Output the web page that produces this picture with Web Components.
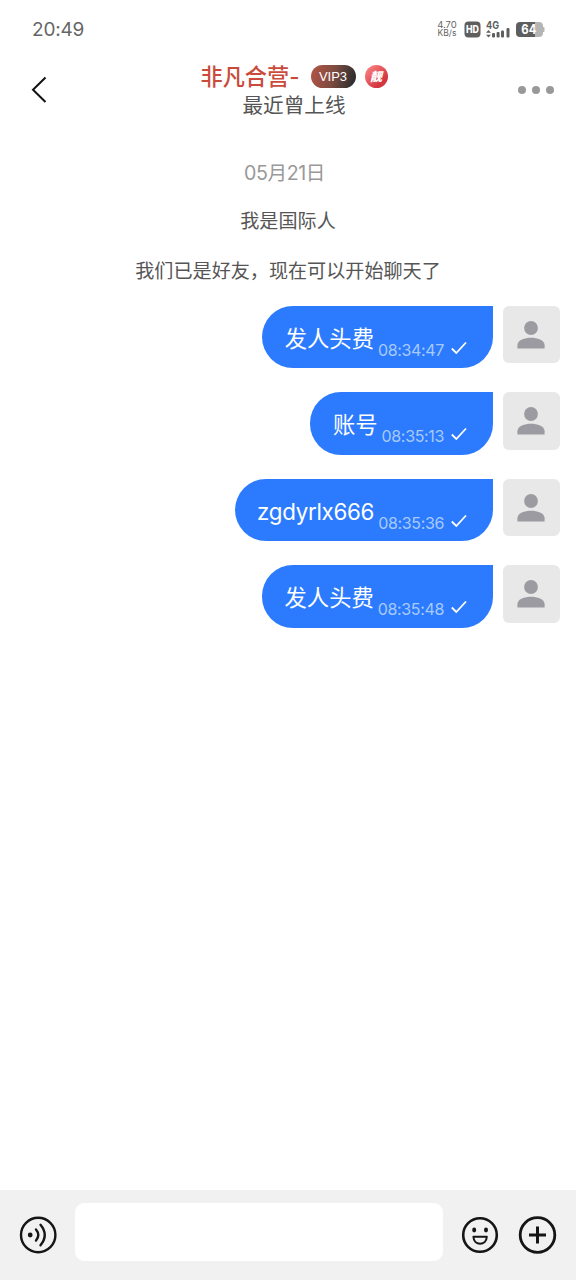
<!DOCTYPE html>
<html lang="zh-CN">
<head>
<meta charset="utf-8">
<title>Chat</title>
<style>
html,body{margin:0;height:100%;background:#fff}
body{font-family:Inter,"Noto Sans CJK SC",sans-serif;overflow:hidden}
</style>
</head>
<body>
<chat-app></chat-app>
<script>
const define = (name, html) => {
  const t = document.createElement('template');
  t.innerHTML = html;
  customElements.define(name, class extends HTMLElement {
    constructor() {
      super();
      this.attachShadow({mode: 'open'}).appendChild(t.content.cloneNode(true));
    }
  });
};

define('status-bar', `
<style>
:host{display:flex;align-items:center;height:58px;padding:0 31px 0 32px;box-sizing:border-box;color:#666}
.clock{font-size:19px;line-height:24px;letter-spacing:-.2px;flex:1;padding-top:2px}
.speed{font-size:9.5px;line-height:9px;text-align:center;width:22px;margin-right:6px;white-space:nowrap}
.speed div+div{font-size:8.500px}
svg{display:block}
text{font-family:Inter,sans-serif}
.hd{margin-right:5px}.sig{margin-right:5px}
</style>
<div class="clock">20:49</div>
<div class="speed"><div>4.70</div><div>KB/s</div></div>
<svg class="hd" width="17" height="17"><rect x=".5" y=".5" width="16" height="16" rx="4" fill="#5e5e5e"/><text x="8.5" y="12.2" font-size="10" font-weight="800" fill="#fff" text-anchor="middle" textLength="13" lengthAdjust="spacingAndGlyphs">HD</text></svg>
<svg class="sig" width="25" height="19"><text x="0" y="8.8" font-size="10.5" font-weight="700" fill="#5e5e5e" textLength="13" lengthAdjust="spacingAndGlyphs">4G</text>
<g fill="#5e5e5e"><path d="M0 12.7 2.5 10 5 12.7zM0 14.8h5l-2.5 2.7z"/><rect x="6" y="13" width="3" height="4.5" rx="1"/><rect x="10.6" y="12" width="3" height="5.5" rx="1"/><rect x="15" y="10.5" width="3" height="7" rx="1"/><rect x="20.5" y="8" width="3" height="9.5" rx="1"/></g></svg>
<svg width="29" height="15"><path d="M4 0h15v15H4a4 4 0 0 1-4-4V4a4 4 0 0 1 4-4z" fill="#5e5e5e"/><path d="M19 0h4a4 4 0 0 1 4 4v7a4 4 0 0 1-4 4h-4z" fill="#b5b5b5"/><rect x="26" y="5" width="2.5" height="5" rx="1" fill="#b5b5b5"/><text x="12.800" y="12.2" font-size="13" font-weight="700" fill="#fff" text-anchor="middle" textLength="15" lengthAdjust="spacingAndGlyphs">64</text></svg>
`);

define('vip-badge', `
<style>
:host{display:block;width:45px;height:23px;border-radius:12px;background:linear-gradient(105deg,#b65545,#7c4b40 50%,#303030 90%);color:#fff;font:13px/23px "Liberation Sans",sans-serif;text-align:center}
</style><slot></slot>`);

define('nice-badge', `
<style>
:host{display:block;width:23px;height:23px;border-radius:50%;background:linear-gradient(135deg,#ff8a8a,#d2363f 75%);color:#fff;font:italic 900 12px/22px "Noto Sans CJK SC",sans-serif;text-align:center}
</style><slot></slot>`);

define('chat-header', `
<style>
:host{display:grid;grid-template-columns:80px 1fr 80px;height:72px}
.back{padding:18px 0 0 31px}
.mid{display:flex;flex-direction:column;align-items:center;padding-left:12px}
.title{display:flex;align-items:center;height:36px}
.name{color:#ca4b3c;font-size:22.2px;font-weight:500;line-height:34px;white-space:nowrap;margin-right:11px;padding-top:1px}
.name::slotted(*){letter-spacing:.1px}
vip-badge{margin-right:9px}
.sub{color:#555;font-size:20.6px;line-height:24px}
.more{display:flex;gap:6px;padding:28px 0 0 22px}
.more i{width:8px;height:8px;border-radius:50%;background:#999}
svg{display:block}
</style>
<div class="back"><svg width="18" height="28" fill="none" stroke="#111" stroke-width="2"><path d="M14.5 1.5 2 13.7 14.5 26"/></svg></div>
<div class="mid"><div class="title"><span class="name"><slot name="name"></slot></span><vip-badge>VIP3</vip-badge><nice-badge>靓</nice-badge></div><div class="sub"><slot name="status"></slot></div></div>
<div class="more"><i></i><i></i><i></i></div>
`);

define('system-note', `
<style>
:host{display:block;text-align:center;font-size:19.1px;line-height:28px;color:#555;white-space:nowrap}
:host([date]){color:#999;font-size:19.6px;letter-spacing:-.4px;padding-right:7px}
</style><slot></slot>`);

define('user-avatar', `
<style>
:host{display:block;width:57.5px;height:57.5px;border-radius:6px;background:#e8e8e8}
svg{display:block;margin:0 auto;padding-top:15px}
</style>
<svg width="28" height="28"><g fill="#9b9ba1"><circle cx="14" cy="7" r="6.9"/><path d="M.4 27.5v-3.2C.4 19 8 16.8 14 16.8S27.600 19 27.600 24.300v3.200z"/></g></svg>`);

define('chat-message', `
<style>
:host{display:flex;justify-content:flex-end;align-items:flex-start;gap:9.500px}
.bubble{display:flex;box-sizing:border-box;height:62.500px;padding:0 26.500px 0 22.500px;border-radius:31px 0 31px 31px;background:#2c7bfe;white-space:nowrap}
.text{color:#fff;font-size:22.300px;line-height:65px}
:host([latin]) .text{letter-spacing:-.27px}
.time{color:#a7cafa;margin-left:4px;font-size:16px;letter-spacing:-.35px;line-height:20px;padding-top:34px}
svg{display:block;margin:35px 0 0 7px}
</style>
<div class="bubble"><span class="text"><slot></slot></span><span class="time"><slot name="time"></slot></span>
<svg width="15.5" height="14" fill="none" stroke="#fff" stroke-width="1.800"><path d="M.8 7.500 5.300 12 15 1.500"/></svg></div>
<user-avatar></user-avatar>`);

define('chat-composer', `
<style>
:host{display:flex;align-items:flex-start;box-sizing:border-box;height:90px;background:#f1f1f1;padding:13px 19px 0}
.field{flex:1;height:58px;border-radius:9px;background:#fff;margin:0 18px 0 18px}
svg{display:block;margin-top:13px}
.plus{margin-left:19px}
</style>
<svg width="38" height="38" fill="none" stroke="#151515" stroke-width="2.400" stroke-linecap="round"><circle cx="19.200" cy="19" r="17.200"/><circle cx="11.200" cy="19" r="2.400" fill="#151515" stroke="none"/><path d="M17 13.500q4.600 5.500 0 11M21.500 8.800q8.500 10.200 0 20.500"/></svg>
<div class="field"></div>
<svg width="38" height="38" fill="none" stroke="#151515" stroke-width="2.600"><circle cx="19" cy="19" r="16.800"/><g fill="#151515" stroke="none"><ellipse cx="13.200" cy="14" rx="2" ry="2.400"/><ellipse cx="25" cy="14" rx="2" ry="2.400"/></g><path d="M12.400 20.800H25.800C25.500 30 12.700 30 12.400 20.800z" stroke-width="2" stroke-linejoin="round"/></svg>
<svg class="plus" width="39" height="38" fill="none" stroke="#151515" stroke-width="2.800"><circle cx="19.500" cy="19" r="17.300"/><path d="M11 19h17M19.500 10.500v17" stroke-width="3"/></svg>`);

define('chat-app', `
<style>
:host{display:flex;flex-direction:column;width:576px;height:1280px;background:#fff}
main{flex:1;display:flex;flex-direction:column}
.notes{display:flex;flex-direction:column;box-sizing:border-box;padding-top:29px;height:175.500px}
.notes system-note+system-note{margin-top:20px}
.notes system-note:last-child{margin-top:22px}
.log{display:flex;flex-direction:column;gap:24px;padding-right:16px}
</style>
<status-bar></status-bar>
<chat-header><span slot="name">非凡合营-</span><span slot="status">最近曾上线</span></chat-header>
<main>
<div class="notes"><system-note date>05月21日</system-note><system-note>我是国际人</system-note><system-note>我们已是好友，现在可以开始聊天了</system-note></div>
<div class="log">
<chat-message>发人头费<span slot="time">08:34:47</span></chat-message>
<chat-message>账号<span slot="time">08:35:13</span></chat-message>
<chat-message latin>zgdyrlx666<span slot="time">08:35:36</span></chat-message>
<chat-message>发人头费<span slot="time">08:35:48</span></chat-message>
</div>
</main>
<chat-composer></chat-composer>
`);
</script>
</body>
</html>
